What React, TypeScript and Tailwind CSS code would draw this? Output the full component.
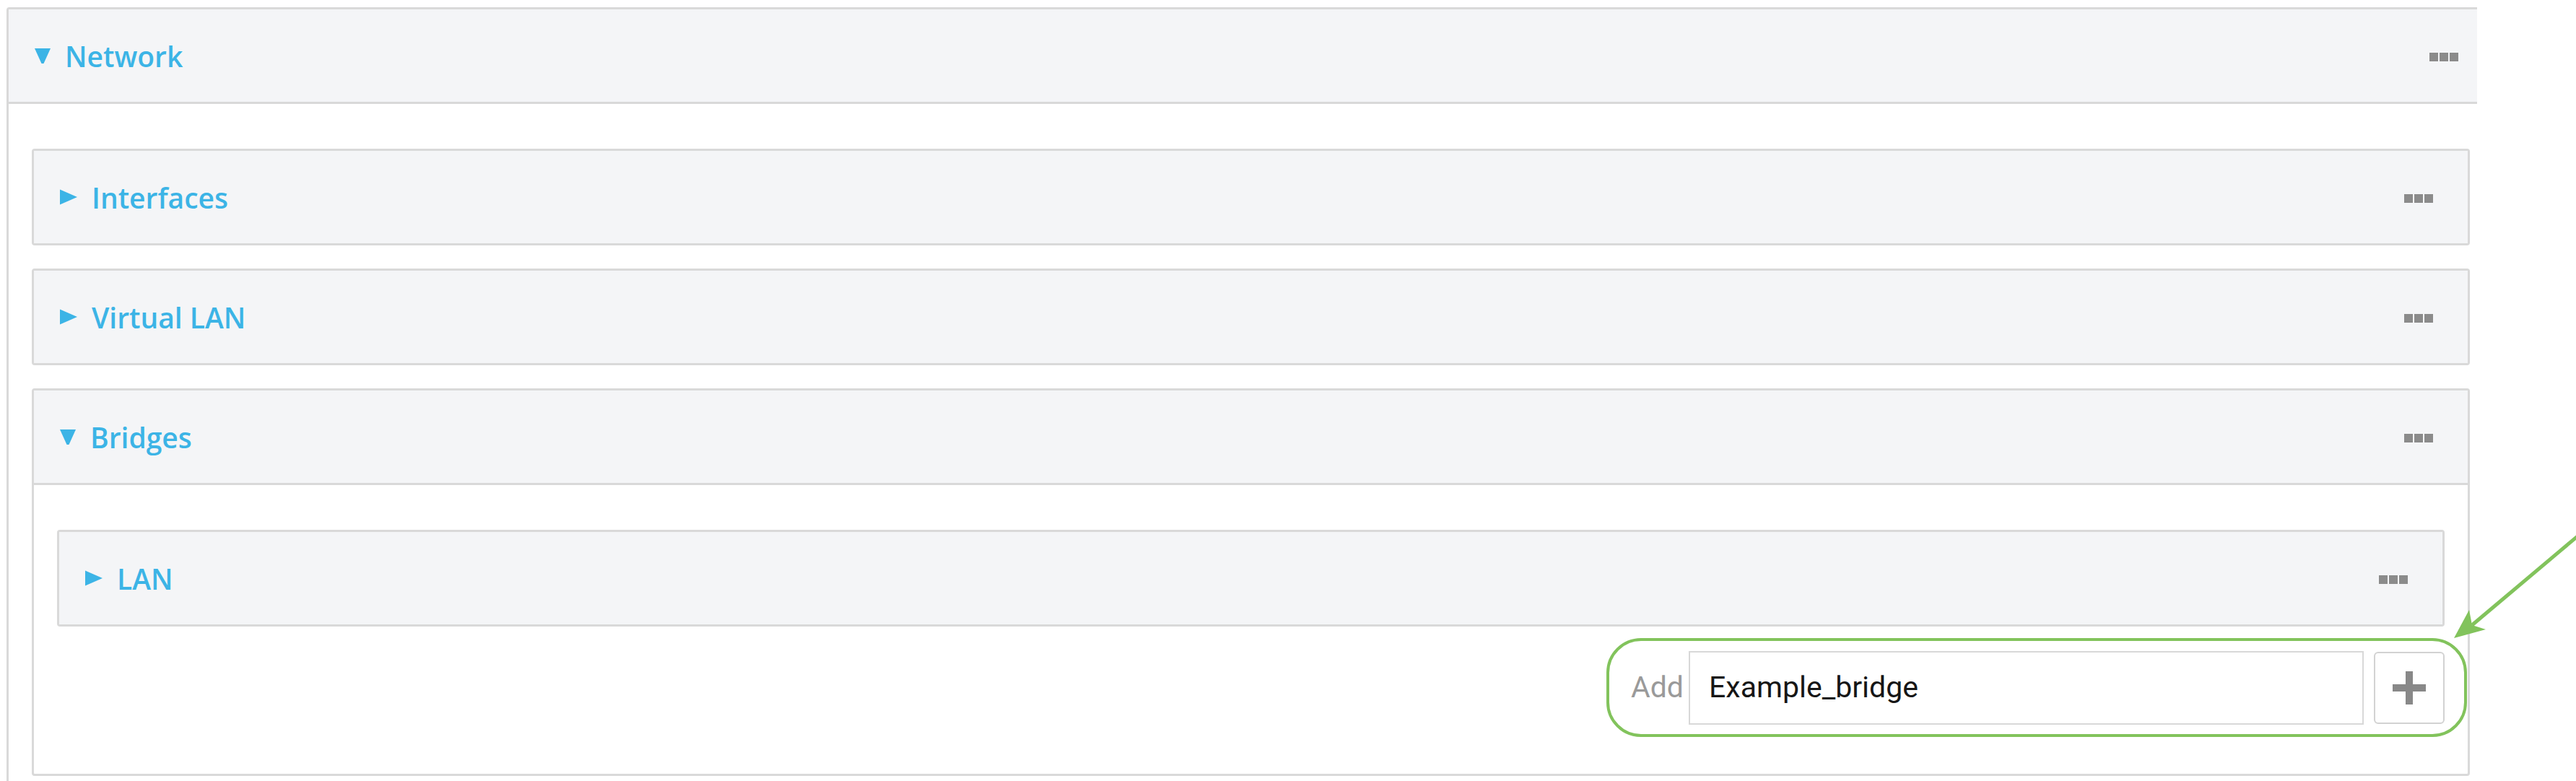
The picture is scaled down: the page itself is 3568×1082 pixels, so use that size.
import React from "react";

type PanelProps = {
  title: string;
  open?: boolean;
  children?: React.ReactNode;
};

function Caret({ open }: { open?: boolean }) {
  if (open) {
    return (
      <svg width="22" height="22" viewBox="0 0 22 22" className="shrink-0">
        <polygon points="0,1 22,1 12.5,22 9.5,22" fill="#3cb4e6" />
      </svg>
    );
  }
  return (
    <svg width="24" height="22" viewBox="0 0 24 22" className="shrink-0">
      <polygon points="0,0.5 24,11 0,21.5" fill="#3cb4e6" />
    </svg>
  );
}

function Dots() {
  return (
    <div className="ml-auto mt-[4px] flex gap-[2px]">
      <span className="h-[12px] w-[12px] bg-[#8b8b8b]" />
      <span className="h-[12px] w-[12px] bg-[#8b8b8b]" />
      <span className="h-[12px] w-[12px] bg-[#8b8b8b]" />
    </div>
  );
}

function Header({ title, open }: { title: string; open?: boolean }) {
  return (
    <div
      className={
        "flex items-center gap-[20px] bg-[#f4f5f7] pl-[36px] pr-[48px] " +
        (open ? "h-[131px] border-b-[3px] border-[#d9d9d9]" : "h-[128px]")
      }
    >
      <Caret open={open} />
      <span className="text-[39px] font-semibold leading-none text-[#3cb4e6]">
        {title}
      </span>
      <Dots />
    </div>
  );
}

function Panel({ title, open, children }: PanelProps) {
  return (
    <div className="overflow-hidden rounded-[4px] border-[3px] border-[#d9d9d9] bg-white">
      <Header title={title} open={open} />
      {open && children}
    </div>
  );
}

function AddRow() {
  return (
    <div className="mt-[16px] flex justify-end">
      {/* highlighted add control */}
      <div className="-mr-[31px] flex h-[137px] items-center rounded-[48px] border-[4px] border-[#82c35c] pl-[30px] pr-[27px] font-['Roboto',sans-serif]">
        <span className="text-[41px] text-[#9a9a9a]">Add</span>
        <div className="ml-[7px] flex h-[102px] w-[935px] items-center border-2 border-[#d8d8d8] bg-white pl-[26px]">
          <span className="text-[41px] text-[#161616]">Example_bridge</span>
        </div>
        <button className="ml-[14px] flex h-[100px] w-[98px] items-center justify-center rounded-[6px] border-2 border-[#d2d2d2] bg-white">
          <svg width="46" height="46" viewBox="0 0 46 46">
            <rect x="18" y="0" width="10" height="46" fill="#888888" />
            <rect x="0" y="18" width="46" height="10" fill="#888888" />
          </svg>
        </button>
      </div>
    </div>
  );
}

export default function App() {
  return (
    <div className="relative h-[1082px] w-[3568px] overflow-hidden bg-white font-['Open_Sans',sans-serif]">
      <div className="ml-[9px] mt-[10px] w-[3422px] overflow-hidden">
        <div className="w-[3447px] rounded-tl-[4px] border-[3px] border-[#d9d9d9] bg-white">
          <Header title="Network" open />
          <div className="flex flex-col gap-[32px] px-[32px] pb-[40px] pt-[62px]">
            <Panel title="Interfaces" />
            <Panel title="Virtual LAN" />
            <Panel title="Bridges" open>
              <div className="px-[32px] pb-[51px] pt-[62px]">
                <Panel title="LAN" />
                <AddRow />
              </div>
            </Panel>
          </div>
        </div>
      </div>

      {/* callout arrow */}
      <svg
        className="pointer-events-none absolute left-0 top-0"
        width="3568"
        height="1082"
        viewBox="0 0 3568 1082"
      >
        <line x1="3570" y1="743" x2="3424" y2="866" stroke="#82c35c" strokeWidth="5" />
        <polygon points="3399,884 3420,845 3424,866 3443,872" fill="#82c35c" />
      </svg>
    </div>
  );
}
